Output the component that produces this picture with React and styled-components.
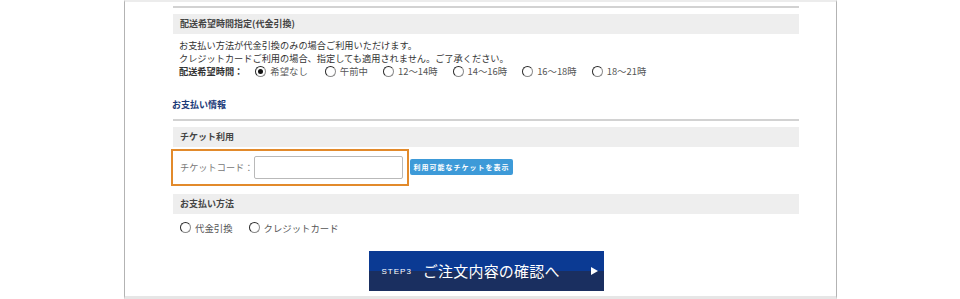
import React from "react";
import styled, { createGlobalStyle } from "styled-components";

const Global = createGlobalStyle`
  html, body { margin: 0; padding: 0; background: #fff; }
  body {
    font-family: "Noto Sans CJK JP", "Noto Sans", "Liberation Sans", sans-serif;
    color: #333;
  }
`;

const Page = styled.div`
  width: 960px;
  height: 299px;
  overflow: hidden;
`;

const Panel = styled.div`
  box-sizing: border-box;
  margin-left: 124px;
  width: 713px;
  height: 299px;
  border-left: 1px solid #b3b3b3;
  border-right: 1px solid #b3b3b3;
  border-top: 2px solid #ececec;
  border-bottom: 3px solid #e6e6e6;
  padding: 4px 37px 0 48px;
  display: flex;
  flex-direction: column;
`;

const Rule = styled.div`
  height: 0;
  border-top: 2px solid #d2d2d2;
  margin-bottom: ${(p) => p.$after}px;
`;

const SectionHead = styled.div`
  height: 20px;
  line-height: 20px;
  background: #eeeeee;
  padding-left: 7px;
  font-size: 9px;
  font-weight: bold;
  color: #444;
`;

const Notes = styled.div`
  padding: 5px 0 0 6px;
  font-size: 9.2px;
  line-height: 13.4px;
  color: #333;
`;

const TimeRow = styled.div`
  display: flex;
  align-items: center;
  height: 12px;
  margin-top: 0;
`;

const BoldLabel = styled.span`
  font-weight: bold;
  color: #333;
  margin-right: 12px;
`;

const Option = styled.label`
  display: inline-flex;
  align-items: center;
  gap: 4px;
  margin-right: ${(p) => p.$gap ?? 15}px;
  font-size: 9.4px;
  color: #555;
  white-space: nowrap;
`;

const Radio = styled.span`
  box-sizing: border-box;
  width: 11px;
  height: 11px;
  border-radius: 50%;
  border: 1.5px solid #2a2a2a;
  border-right-color: #8a8a8a;
  border-bottom-color: #8a8a8a;
  background: #fff;
  display: inline-flex;
  align-items: center;
  justify-content: center;
  &::after {
    content: "";
    width: 5px;
    height: 5px;
    border-radius: 50%;
    background: ${(p) => (p.$checked ? "#111" : "transparent")};
  }
`;

const InfoTitle = styled.div`
  margin-top: 20px;
  margin-left: -1px;
  height: 14px;
  line-height: 14px;
  font-size: 9px;
  font-weight: bold;
  color: #1b3a78;
`;

const RuleWrap = styled.div`
  margin-top: 7px;
`;

const TicketRow = styled.div`
  display: flex;
  align-items: center;
  margin-top: 2px;
`;

const TicketBox = styled.div`
  box-sizing: border-box;
  margin-left: -2px;
  width: 238px;
  height: 37px;
  border: 2px solid #e28a2b;
  display: flex;
  align-items: center;
  padding: 0 5px 0 7px;
  justify-content: space-between;
`;

const FieldLabel = styled.span`
  font-size: 9.2px;
  color: #777;
  white-space: nowrap;
`;

const CodeInput = styled.input`
  box-sizing: border-box;
  width: 149px;
  height: 23px;
  border: 1px solid #b9b9b9;
  border-radius: 2px;
  padding: 0 4px;
  outline: none;
  background: #fff;
`;

const SmallButton = styled.button`
  margin-left: 1px;
  height: 16px;
  width: 103px;
  padding: 0;
  border: none;
  border-radius: 2px;
  background: #3d9ad8;
  color: #fff;
  font-family: inherit;
  font-size: 7px;
  font-weight: bold;
  letter-spacing: 1px;
  white-space: nowrap;
  cursor: pointer;
`;

const PayHead = styled(SectionHead)`
  margin-top: 8px;
`;

const PayRow = styled.div`
  display: flex;
  align-items: center;
  height: 12px;
  margin-top: 8px;
  padding-left: 7px;
`;

const StepWrap = styled.div`
  display: flex;
  justify-content: center;
  margin-top: 17px;
`;

const StepButton = styled.button`
  width: 235px;
  height: 40px;
  border: none;
  padding: 0 0 0 13px;
  background: linear-gradient(to bottom, #0b3a93 0%, #0b3a93 50%, #1a2f60 50%, #1a2f60 100%);
  color: #fff;
  display: flex;
  align-items: center;
  font-family: inherit;
  cursor: pointer;
`;

const StepSmall = styled.span`
  font-family: "Liberation Sans", "Noto Sans", sans-serif;
  font-size: 8px;
  letter-spacing: 1px;
  margin-right: 11px;
  margin-top: 2px;
`;

const StepLabel = styled.span`
  font-size: 15px;
  letter-spacing: 0.2px;
`;

const Arrow = styled.span`
  margin-left: auto;
  margin-right: 6px;
  width: 0;
  height: 0;
  border-top: 4px solid transparent;
  border-bottom: 4px solid transparent;
  border-left: 7px solid #fff;
`;

const times = [
  { t: "希望なし", c: true, g: 17 },
  { t: "午前中" },
  { t: "12～14時" },
  { t: "14～16時" },
  { t: "16～18時" },
  { t: "18～21時" },
];

export default function App() {
  return (
    <Page>
      <Global />
      <Panel>
        <Rule $after={6} />
        <SectionHead>配送希望時間指定(代金引換)</SectionHead>
        <Notes>
          <div>お支払い方法が代金引換のみの場合ご利用いただけます。</div>
          <div>クレジットカードご利用の場合、指定しても適用されません。ご了承ください。</div>
          <TimeRow>
            <BoldLabel>配送希望時間：</BoldLabel>
            {times.map((x) => (
              <Option key={x.t} $gap={x.g}>
                <Radio $checked={x.c} />
                {x.t}
              </Option>
            ))}
          </TimeRow>
        </Notes>

        <InfoTitle>お支払い情報</InfoTitle>
        <RuleWrap>
          <Rule $after={6} />
        </RuleWrap>
        <SectionHead>チケット利用</SectionHead>
        <TicketRow>
          <TicketBox>
            <FieldLabel>チケットコード：</FieldLabel>
            <CodeInput type="text" />
          </TicketBox>
          <SmallButton>利用可能なチケットを表示</SmallButton>
        </TicketRow>

        <PayHead>お支払い方法</PayHead>
        <PayRow>
          <Option $gap={16}>
            <Radio />
            代金引換
          </Option>
          <Option>
            <Radio />
            クレジットカード
          </Option>
        </PayRow>

        <StepWrap>
          <StepButton>
            <StepSmall>STEP3</StepSmall>
            <StepLabel>ご注文内容の確認へ</StepLabel>
            <Arrow />
          </StepButton>
        </StepWrap>
      </Panel>
    </Page>
  );
}
